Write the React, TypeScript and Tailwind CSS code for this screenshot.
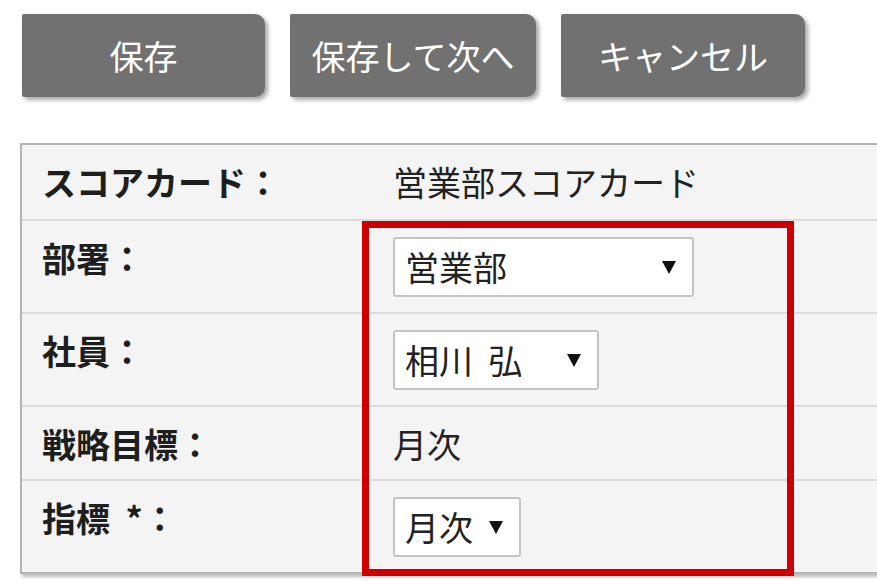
import React from 'react';

const font = { fontFamily: '"Noto Sans CJK JP", "Noto Sans", sans-serif' };

function Arrow() {
    return (
        <svg width="14" height="13" viewBox="0 0 14 13" className="shrink-0">
            <path d="M0 0 H14 L7 13 Z" fill="#111" />
        </svg>
    );
}

function FakeSelect({ value, width }: { value: string; width: string }) {
    return (
        <div
            className={`flex h-[60px] items-center justify-between rounded-[3px] border-2 border-[#c4c4c4] bg-white pl-[10px] pr-[16px] ${width}`}
        >
            <span className="whitespace-pre text-[34px] leading-none text-[#222]">{value}</span>
            <Arrow />
        </div>
    );
}

function Row({
    label,
    children,
    last,
}: {
    label: string;
    children: React.ReactNode;
    last?: boolean;
}) {
    return (
        <div className={`flex ${last ? '' : 'border-b-2 border-[#dcdcdc]'}`}>
            <div className="w-[371px] shrink-0 whitespace-pre pb-[15px] pl-[20px] pt-4 text-[34px] font-bold leading-[41px] text-[#1e1e1e]">
                {label}
            </div>
            <div className="pb-[15px] pt-4">{children}</div>
        </div>
    );
}

export default function App() {
    const buttons = [
        { label: '保存', w: 'w-[243px]' },
        { label: '保存して次へ', w: 'w-[246px]' },
        { label: 'キャンセル', w: 'w-[244px]' },
    ];

    return (
        <div className="relative h-[585px] w-[877px] overflow-hidden bg-white" style={font}>
            {/* Action buttons */}
            <div className="flex gap-[25px] pl-[22px] pt-[14px]">
                {buttons.map((b) => (
                    <button
                        key={b.label}
                        className={`flex h-[83px] items-center justify-center rounded-r-[10px] rounded-l-[2px] bg-[#717171] text-[34px] text-white shadow-[3px_3px_4px_rgba(0,0,0,0.35)] ${b.w}`}
                    >
                        {b.label}
                    </button>
                ))}
            </div>

            {/* Form table */}
            <div className="ml-[20px] mt-[46px] w-[900px] border-l-2 border-t-2 border-b-2 border-[#b4b4b4] bg-[#f4f4f4] shadow-[2px_3px_3px_rgba(0,0,0,0.25)]">
                <div className="flex border-b-2 border-[#dcdcdc]">
                    <div className="w-[371px] shrink-0 py-4 pl-[20px] text-[34px] font-bold leading-[42px] text-[#1e1e1e]">
                        スコアカード：
                    </div>
                    <div className="py-4 text-[34px] leading-[42px] text-[#222]">営業部スコアカード</div>
                </div>
                <Row label="部署：">
                    <FakeSelect value="営業部" width="w-[301px]" />
                </Row>
                <Row label="社員：">
                    <FakeSelect value="相川  弘" width="w-[206px]" />
                </Row>
                <Row label="戦略目標：">
                    <div className="text-[34px] leading-[41px] text-[#222]">月次</div>
                </Row>
                <Row label="指標  *：" last>
                    <FakeSelect value="月次" width="w-[128px]" />
                </Row>
            </div>

            {/* Highlight annotation */}
            <div className="pointer-events-none absolute left-[362px] top-[221px] h-[355px] w-[432px] border-[7px] border-[#cc0000]" />
        </div>
    );
}
